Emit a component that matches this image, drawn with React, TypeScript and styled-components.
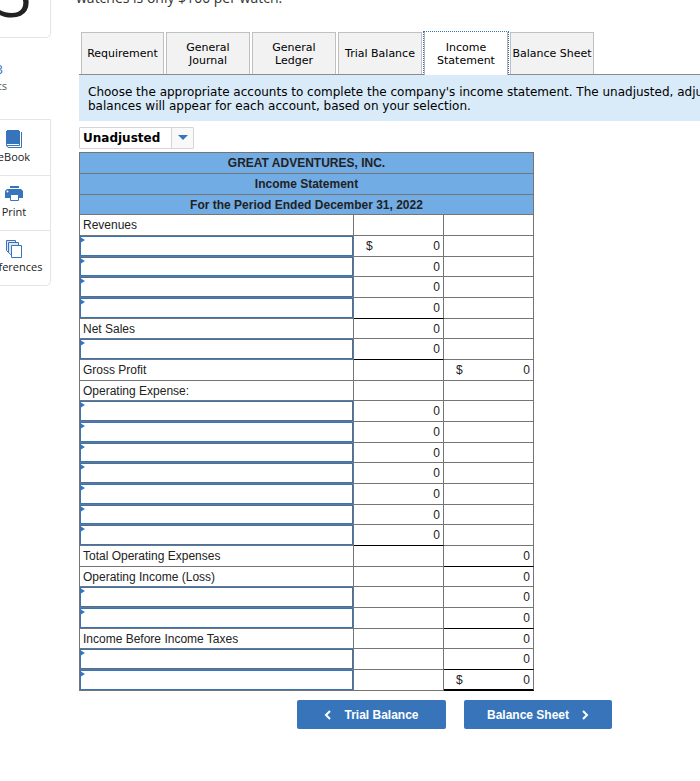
import React from "react";
import styled, { createGlobalStyle, css } from "styled-components";

const GlobalStyle = createGlobalStyle`
  *, *::before, *::after { box-sizing: border-box; }
  body { margin: 0; background: #fff; color: #000; font-family: "Liberation Sans", Arial, sans-serif; font-size: 12px; }
`;

const blue = "#3874ba";
const gridLine = "#757575";
const verdana = '"DejaVu Sans", Verdana, sans-serif';

const Page = styled.div`
  display: flex;
  align-items: flex-start;
  min-height: 100vh;
  overflow: hidden;
`;

const Sidebar = styled.aside`
  flex: none;
  width: 74px;
  margin-left: -23px;
  font-family: "Open Sans", "Noto Sans", sans-serif;
`;

const QuestionBox = styled.div`
  display: flex;
  align-items: flex-end;
  justify-content: center;
  height: 38px;
  padding-bottom: 12px;
  border: 1px solid #e4e4e4;
  border-top: 0;
  border-radius: 0 0 5px 5px;
  font-size: 64px;
  font-weight: 500;
  line-height: 64px;
  color: #222;
`;

const Score = styled.div`
  padding: 22px 0 0;
  width: 30px;
  height: 81px;
  display: flex;
  flex-direction: column;
  align-items: flex-end;
  font-size: 11px;
  line-height: 15px;
  color: #555;
`;

const ScoreValue = styled.div`
  width: 26px;
  text-align: right;
  font-size: 13px;
  line-height: 18px;
  color: ${blue};
  align-self: flex-start;
`;

const ToolList = styled.nav`
  border: 1px solid #e4e4e4;
  border-radius: 0 0 5px 5px;
`;

const Tool = styled.button`
  display: flex;
  flex-direction: column;
  align-items: center;
  width: 100%;
  height: 55px;
  padding: 9px 0 0;
  border: 0;
  background: none;
  color: #222;
  font: 11px/14px "Open Sans", "Noto Sans", sans-serif;
  cursor: pointer;
  & + & { border-top: 1px solid #e4e4e4; padding-top: 8px; }
  svg { display: block; margin-bottom: 1px; }
`;

const Main = styled.main`
  flex: 1 0 0;
  min-width: 0;
  padding: 0 0 52px 28px;
`;

const Problem = styled.p`
  display: flex;
  align-items: flex-start;
  height: 32px;
  margin: 0 0 0 -3px;
  font: 14px/20px "Open Sans", "Noto Sans", sans-serif;
  color: #333;
  span { margin-top: -12px; }
`;

const TabBar = styled.div`
  display: flex;
  gap: 2px;
  height: 43px;
  padding: 0 2px;
  border-bottom: 1px solid #8c8c8c;
`;

const Tab = styled.button<{ $active?: boolean }>`
  flex: none;
  width: 84px;
  height: 42px;
  padding: 0;
  border: 1px solid #c0c0c0;
  border-bottom: 0;
  background: #f2f2f2;
  color: #000;
  font: 11px/13px ${verdana};
  white-space: nowrap;
  cursor: pointer;
  &:first-child { width: 83px; }
  ${(p) =>
    p.$active &&
    css`
      width: 86px;
      height: 44px;
      margin: -1px -1px 0;
      background: #fff;
      border: 1px dotted ${blue};
      border-bottom: 0;
      box-shadow: inset 1px 0 #b4b4b4, inset -1px 0 #b4b4b4;
    `}
`;

const Notice = styled.div`
  height: 46px;
  padding: 10px 0 0 9px;
  overflow: hidden;
  background: #d9ebf9;
  font: 12px/14px ${verdana};
  white-space: nowrap;
`;

const ViewSelect = styled.label`
  position: relative;
  display: flex;
  width: 115px;
  margin: 6px 0 3px;
  border: 1px solid #d5d5d5;
  border-radius: 1px;
  select {
    appearance: none;
    width: 100%;
    height: 20px;
    padding: 0 0 0 3px;
    border: 0;
    background: linear-gradient(to left, #f9f9f9 21px, #d5d5d5 21px 22px, #fff 22px);
    font: bold 12px/20px ${verdana};
    color: #000;
  }
  svg { position: absolute; right: 5px; top: 7px; pointer-events: none; }
`;

const Sheet = styled.table`
  width: 455px;
  table-layout: fixed;
  border-collapse: separate;
  border-spacing: 0;
  border-top: 1px solid ${gridLine};
  border-left: 1px solid ${gridLine};
  color: #222;
  line-height: 16px;
  tr { height: 21px; }
  tr:nth-child(3n) { height: 20px; }
`;

const LabelCol = styled.col`
  width: 274px;
`;

const Title = styled.th`
  padding: 0;
  border: solid ${gridLine};
  border-width: 0 1px 1px 0;
  background: #72ace5;
`;

const RowLabel = styled.th`
  padding: 0 3px;
  border: solid ${gridLine};
  border-width: 0 1px 1px 0;
  text-align: left;
  font-weight: normal;
`;

const PickerCell = styled.td`
  position: relative;
  height: inherit;
  padding: 0;
  border: solid ${gridLine};
  border-width: 0 1px 1px 0;
  &::before {
    content: "";
    position: absolute;
    left: 0;
    top: 1px;
    border: solid transparent;
    border-width: 3px 0 3px 5px;
    border-left-color: ${blue};
    pointer-events: none;
  }
`;

const AccountPicker = styled.select`
  appearance: none;
  display: block;
  width: 100%;
  height: 100%;
  padding: 0 6px;
  border: 1px solid ${blue};
  border-radius: 0;
  background: none;
  font: inherit;
`;

type Rule = "single" | "double" | undefined;

const AmountCell = styled.td<{ $rule?: Rule }>`
  padding: 0 3px 0 12px;
  border: solid ${gridLine};
  border-width: 0 1px 1px 0;
  ${(p) => p.$rule && css`border-bottom-color: #000;`}
  ${(p) => p.$rule === "double" && css`border-bottom-width: 2px;`}
`;

const Amount = styled.div`
  display: flex;
  justify-content: flex-end;
  span { margin-right: auto; }
`;

const Pager = styled.div`
  display: flex;
  gap: 18px;
  padding: 9px 0 0 218px;
`;

const PageButton = styled.button`
  display: flex;
  align-items: center;
  justify-content: center;
  gap: 12px;
  width: 149px;
  height: 29px;
  padding: 0;
  border: 0;
  border-radius: 2px;
  background: ${blue};
  color: #fff;
  font: bold 12px/16px "Liberation Sans", Arial, sans-serif;
  cursor: pointer;
  & + & { width: 148px; }
`;

type Cell = { dollar?: boolean; value?: string; rule?: Rule };
type Line = { label?: string; left?: Cell; right?: Cell };

const zero: Cell = { value: "0" };
const ruled: Cell = { value: "0", rule: "single" };

const lines: Line[] = [
  { label: "Revenues" },
  { left: { value: "0", dollar: true } },
  { left: zero },
  { left: zero },
  { left: ruled },
  { label: "Net Sales", left: zero },
  { left: ruled },
  { label: "Gross Profit", right: { value: "0", dollar: true } },
  { label: "Operating Expense:" },
  { left: zero },
  { left: zero },
  { left: zero },
  { left: zero },
  { left: zero },
  { left: zero },
  { left: ruled },
  { label: "Total Operating Expenses", right: ruled },
  { label: "Operating Income (Loss)", right: zero },
  { right: zero },
  { right: ruled },
  { label: "Income Before Income Taxes", right: zero },
  { right: ruled },
  { right: { value: "0", dollar: true, rule: "double" } },
];

const tabs = ["Requirement", "General\nJournal", "General\nLedger", "Trial Balance", "Income\nStatement", "Balance Sheet"];

const BookIcon = () => (
  <svg width="18" height="20" viewBox="0 0 18 20" fill="none" stroke={blue}>
    <path d="M2 1h12v14H2z" fill={blue} stroke="none" />
    <path d="M1.500 2v14.500l1.500 2h13.500V3M1.500 16.500H14.500V2" />
  </svg>
);

const PrintIcon = () => (
  <svg width="18" height="20" viewBox="0 0 18 20" fill={blue}>
    <path d="M5 2h9v2H5zM2 5h14l2 2v7h-4v-3H5v3H0V7z" />
    <circle cx="2.500" cy="7.500" r="1" fill="#fff" />
    <path d="M5.500 10.500h8v6h-8z" fill="#fff" stroke={blue} />
  </svg>
);

const PagesIcon = () => (
  <svg width="18" height="20" viewBox="0 0 18 20" fill="#e3e3ef" stroke={blue}>
    <path d="M1.500 1.500h9v12h-7l-2-2z" />
    <path d="M3.500 3.500h10v12h-8l-2-2z" />
    <path d="M6.500 6.500h10v12h-10z" fill="#fff" />
  </svg>
);

const Chevron = ({ d }: { d: string }) => (
  <svg width="8" height="12" viewBox="0 0 8 12" fill="none" stroke="#fff" strokeWidth="2">
    <path d={d} />
  </svg>
);

const AmountBox = ({ cell }: { cell?: Cell }) => (
  <AmountCell $rule={cell?.rule}>
    {cell?.value && (
      <Amount>
        {cell.dollar && <span>$</span>}
        {cell.value}
      </Amount>
    )}
  </AmountCell>
);

export default function App() {
  return (
    <>
      <GlobalStyle />
      <Page>
        <Sidebar>
          <QuestionBox>5</QuestionBox>
          <Score>
            <ScoreValue>0.83</ScoreValue>
            points
          </Score>
          <ToolList>
            <Tool><BookIcon />eBook</Tool>
            <Tool><PrintIcon />Print</Tool>
            <Tool><PagesIcon />References</Tool>
          </ToolList>
        </Sidebar>
        <Main>
          <Problem><span>watches is only $100 per watch.</span></Problem>
          <TabBar role="tablist">
            {tabs.map((t) => (
              <Tab key={t} role="tab" $active={t.startsWith("Income")} aria-selected={t.startsWith("Income")}>
                {t.split("\n").map((word) => <div key={word}>{word}</div>)}
              </Tab>
            ))}
          </TabBar>
          <Notice>
            Choose the appropriate accounts to complete the company's income statement. The unadjusted, adjusted
            <br />
            balances will appear for each account, based on your selection.
          </Notice>
          <ViewSelect>
            <select aria-label="Balance type">
              <option>Unadjusted</option>
            </select>
            <svg width="10" height="5" viewBox="0 0 10 5" fill={blue}><path d="M0 0h10L5 5z" /></svg>
          </ViewSelect>
          <Sheet>
            <colgroup><LabelCol /><col /><col /></colgroup>
            <thead>
              <tr><Title colSpan={3}>GREAT ADVENTURES, INC.</Title></tr>
              <tr><Title colSpan={3}>Income Statement</Title></tr>
              <tr><Title colSpan={3}>For the Period Ended December 31, 2022</Title></tr>
            </thead>
            <tbody>
              {lines.map((line, i) => (
                <tr key={i}>
                  {line.label ? (
                    <RowLabel scope="row">{line.label}</RowLabel>
                  ) : (
                    <PickerCell>
                      <AccountPicker aria-label={`Account for line ${i + 1}`}><option /></AccountPicker>
                    </PickerCell>
                  )}
                  <AmountBox cell={line.left} />
                  <AmountBox cell={line.right} />
                </tr>
              ))}
            </tbody>
          </Sheet>
          <Pager>
            <PageButton><Chevron d="M6 2L2 6l4 4" />Trial Balance</PageButton>
            <PageButton>Balance Sheet<Chevron d="M2 2l4 4-4 4" /></PageButton>
          </Pager>
        </Main>
      </Page>
    </>
  );
}
